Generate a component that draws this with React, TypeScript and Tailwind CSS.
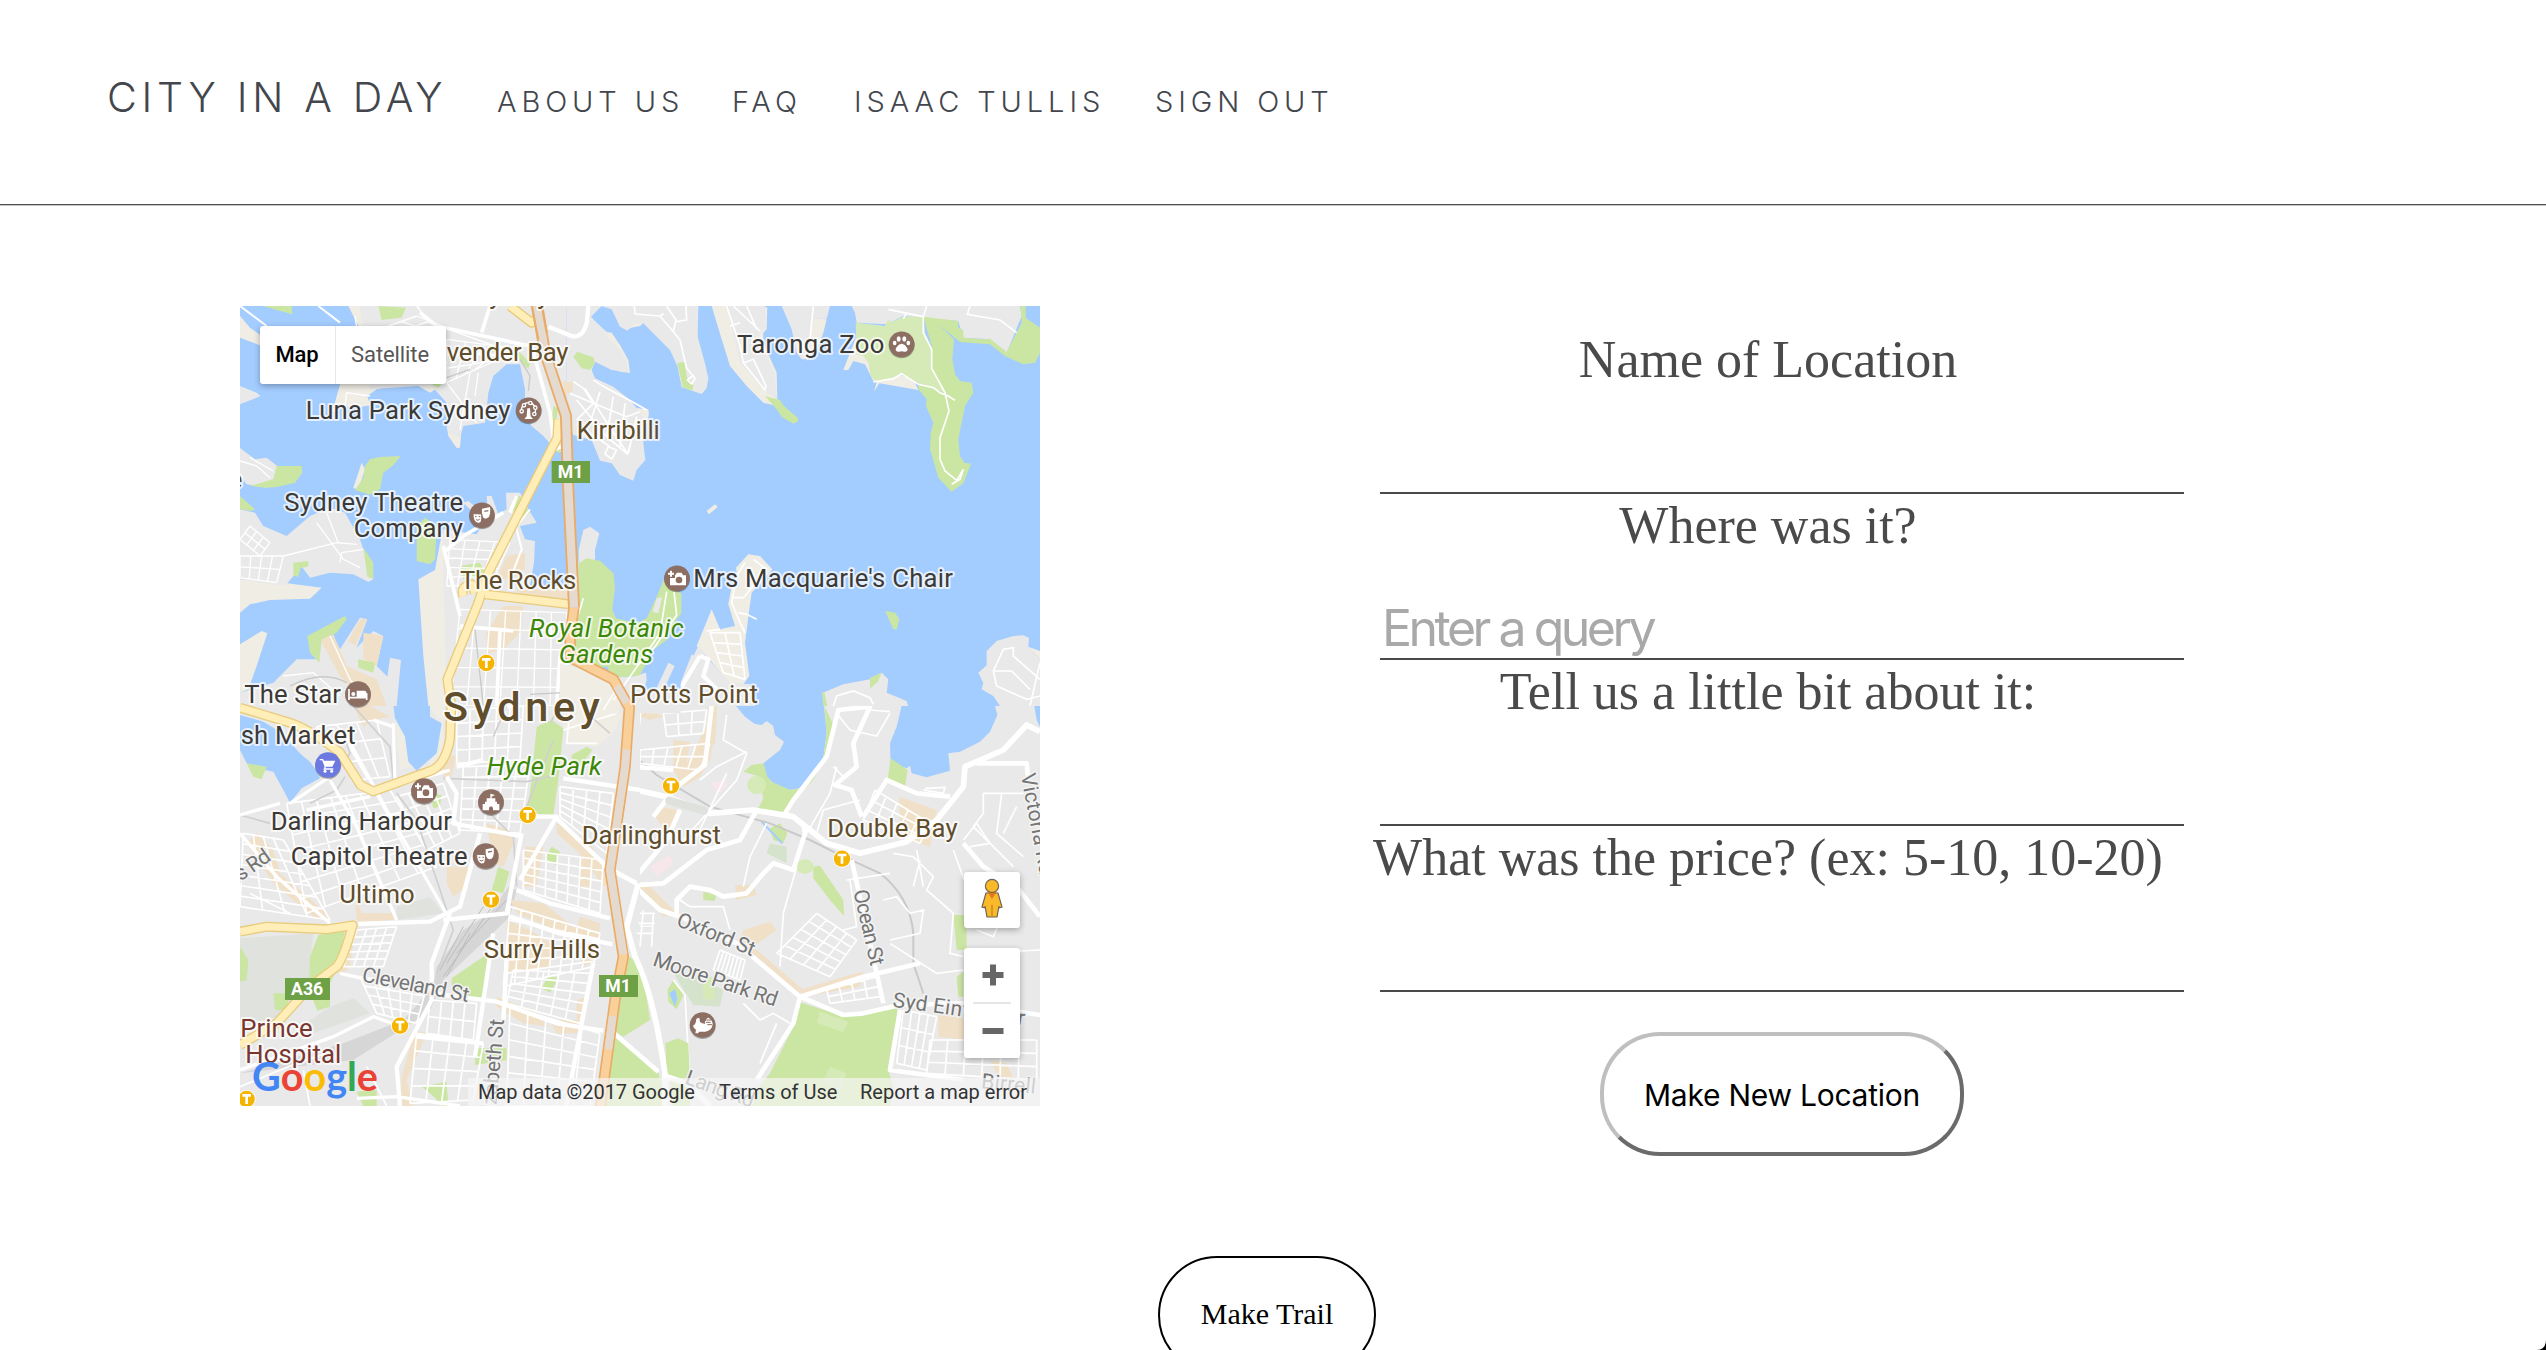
import React from 'react';

type Pt = [number, number];

/* Street grid interpolated inside a quadrilateral a-b-c-d (clockwise). */
function grid(a: Pt, b: Pt, c: Pt, d: Pt, n: number, m: number): string {
  const mix = (p: Pt, q: Pt, t: number): Pt => [p[0] + (q[0] - p[0]) * t, p[1] + (q[1] - p[1]) * t];
  let s = '';
  for (let i = 0; i <= n; i++) {
    const p = mix(a, b, i / n);
    const q = mix(d, c, i / n);
    s += `M${p[0]},${p[1]}L${q[0]},${q[1]}`;
  }
  for (let j = 0; j <= m; j++) {
    const p = mix(a, d, j / m);
    const q = mix(b, c, j / m);
    s += `M${p[0]},${p[1]}L${q[0]},${q[1]}`;
  }
  return s;
}

const LAND = '#e9e9e9';
const CREAM = '#f0ede5';
const PARK = '#cbe6a3';
const WATER = '#a3ccff';
const TAN = '#f0e0c8';
const HOOD = '#5f4d2b';
const POI = '#3c3a37';
const GREEN = '#3c8708';
const ROAD = '#757575';

const Shapes = ({ fill, list }: { fill: string; list: string[] }) => (
  <g fill={fill}>
    {list.map((p, i) => (
      <polygon key={i} points={p} />
    ))}
  </g>
);

const Tile = ({ x, y, vx, vy, children }: { x: number; y: number; vx: number; vy: number; children: React.ReactNode }) => (
  <svg x={x} y={y} width="1200" height="1200" viewBox={`${vx} ${vy} 1200 1200`}>
    {children}
  </svg>
);

function NorthWest() {
  return (
    <Tile x={30} y={30} vx={30} vy={30}>
      <rect x="30" y="30" width="1200" height="1200" fill={WATER} />
      <Shapes
        fill={CREAM}
        list={[
          '355,30 640,30 640,265 600,290 540,255 440,280 412,300 420,328 380,335 345,330 308,348 320,300 335,250 385,90',
          '30,60 60,95 95,120 95,150 30,125',
          '395,500 370,575 385,582 405,520',
          '30,850 160,860 275,875 240,908 120,912 60,925 30,950',
          '30,1045 95,1005 112,1012 80,1110 55,1180 30,1190',
          '650,390 655,420 680,456 690,455 695,395',
          '565,850 615,822 630,740 640,700 680,1230 595,1230 580,1080',
        ]}
      />
      <Shapes
        fill={LAND}
        list={[
          '390,30 560,30 580,60 640,90 700,120 640,265 560,270 420,280 400,100',
          '570,30 1100,30 1072,100 1090,130 1130,165 1190,190 1200,232 1140,222 1090,205 1060,230 1110,270 1170,310 1235,345 1235,525 1210,552 1150,505 1110,450 1050,440 1030,440 1000,472 975,460 940,420 905,390 885,350 885,280 870,205 830,205 790,240 775,290 765,380 700,390 690,425 655,410 650,320 600,265 570,240',
          '30,270 80,290 92,300 30,325',
          '30,456 75,490 110,485 145,512 130,550 110,575 50,565 30,540',
          '30,640 75,650 100,690 170,720 240,660 300,635 345,650 390,730 400,760 430,850 415,858 370,835 300,830 240,845 210,805 190,840 165,870 30,850',
          '130,1160 200,1090 265,1090 275,1030 300,1010 330,1060 390,965 412,970 380,1055 430,1005 460,1020 440,1110 480,1150 470,1230 30,1230 30,1190',
          '480,1085 513,1092 500,1230 460,1230',
          '640,700 740,715 760,680 700,620 715,615 775,665 770,600 785,600 805,655 830,640 828,590 870,590 895,640 920,680 870,690 885,730 915,735 912,800 900,870 1010,870 1050,790 1055,730 1075,690 1105,710 1090,780 1150,860 1160,960 1230,1020 1230,1230 650,1230 640,800',
        ]}
      />
      <Shapes
        fill={TAN}
        list={[
          '830,780 885,770 885,820 845,850 800,850',
          '860,880 1010,880 1010,920 870,910',
          '1000,255 1030,260 1025,290 1005,295',
          '270,1030 310,1015 350,1110 440,1150 470,1230 410,1230 330,1140',
          '400,1010 460,1020 440,1110 400,1090',
          '820,930 880,930 870,1010 820,1060 770,1075 770,1010',
          '355,1035 390,970 412,970 375,1050',
        ]}
      />
      <Shapes
        fill={PARK}
        list={[
          '100,30 185,30 187,55 140,42',
          '445,30 528,35 515,65 455,72',
          '140,510 215,510 217,530 195,560 140,573 110,575 60,570 130,550',
          '420,490 450,483 512,480 490,508 460,530 450,580 420,596 375,582 400,545 405,510',
          '30,600 75,640 65,645 30,640',
          '400,755 430,800 430,850 412,842',
          '190,800 235,795 235,812 212,815 205,842 190,840',
          '232,1020 345,960 350,970 320,1010 275,1030 268,1100 240,1070',
          '560,690 585,665 620,690 615,790 600,805 560,795',
          '850,605 870,600 900,650 875,670 845,640',
          '690,810 750,800 770,840 700,850',
          '385,1090 435,1100 430,1130 385,1115',
          '970,330 985,335 978,380 965,385',
          '780,150 805,145 808,165 785,168',
          '860,160 900,200 895,220 870,195',
          '600,262 635,262 625,276',
          '970,455 1000,460 985,472',
        ]}
      />
      <path
        d={
          grid([30, 780], [160, 780], [140, 860], [30, 845], 4, 2) +
          grid([60, 690], [120, 740], [90, 780], [30, 730], 3, 2) +
          grid([690, 940], [1010, 950], [1010, 1230], [660, 1230], 7, 5) +
          grid([660, 730], [840, 740], [780, 870], [650, 870], 4, 5) +
          grid([650, 130], [880, 160], [760, 210], [650, 260], 4, 3) +
          grid([420, 110], [560, 60], [640, 90], [520, 130], 3, 2) +
          'M30,495L80,510L120,545M60,485L130,525M160,780L320,740L380,745M260,680L340,790L390,815M330,800L335,770L400,760M290,650L325,740M300,1020L360,1150L400,1200M160,1140L250,1130L330,1200M650,260L740,380M720,230L690,400M745,230L735,300M345,330L350,290L420,300M375,60L385,130M560,30L600,80L850,170'
        }
        fill="none"
        stroke="#fff"
        strokeWidth="4"
      />
      <g fill="none" stroke="#fff" strokeLinejoin="round">
        <path strokeWidth="11" d="M570,50L620,90L900,150M905,150L960,350L975,460L1000,450M780,30L755,110M640,770L700,720L820,650M690,990L850,1005M810,1000L800,1230M990,1080L980,1230M640,750L690,960M860,600L840,650" />
        <path strokeWidth="6" d="M850,660L875,760L840,850M900,640L860,690M30,30L110,90M265,30L330,80" />
      </g>
      <g fill="none" stroke="#c9c9c9" strokeWidth="4">
        <path d="M870,190L900,240L895,285M735,1000L760,1230M900,1195L1000,1190L1080,1230M650,245L720,220M180,1170Q280,1120 350,1160" />
      </g>
    </Tile>
  );
}

function NorthEast() {
  return (
    <Tile x={1230} y={30} vx={30} vy={30}>
      <rect x="30" y="30" width="1200" height="1200" fill={WATER} />
      <Shapes
        fill={CREAM}
        list={[
          '245,30 300,30 330,160 420,290 442,305 442,330 400,320 350,270 300,210 275,130',
          '400,30 412,35 410,100 400,110 400,140 440,230 442,305 425,280 380,120',
          '545,65 590,70 580,110 565,150 530,195 535,130',
          '230,645 255,625 263,633 237,655',
          '640,222 655,222 670,195 705,205 730,255 740,258 732,287 748,262 865,282 850,250 780,225 700,180 680,120 660,170',
          '355,775 390,780 427,820 365,890 358,940 345,1040 358,1140 340,1165 300,1165 230,1080 200,1050 245,940 270,1000 315,990 295,925 305,870 325,870 318,815',
          '1195,1052 1230,1065 1230,1090',
        ]}
      />
      <Shapes
        fill={LAND}
        list={[
          '290,30 405,30 408,100 385,105 395,150 435,235 440,310 410,290 330,200 310,120',
          '455,30 600,30 590,68 550,68 535,190 515,190 500,170 485,100',
          '665,30 1170,30 1175,60 1130,170 1080,130 1000,125 985,75 820,60 770,85 680,80 675,50',
          '0,1140 50,1135 50,1170 80,1165 115,1098 135,1105 110,1150 150,1165 185,1075 300,1160 360,1165 375,1230 0,1230',
          '185,1090 205,1050 235,1090 300,1160 250,1200 150,1180',
          '578,1190 640,1165 720,1150 755,1130 775,1150 770,1190 830,1215 835,1232 590,1232',
          '1230,1090 1195,1052 1197,1025 1180,1018 1150,1020 1100,1035 1070,1065 1070,1108 1045,1130 1060,1160 1055,1180 1090,1200 1110,1230 1230,1230',
        ]}
      />
      <Shapes
        fill={PARK}
        list={[
          '405,300 450,312 462,330 503,365 505,375 490,383 455,362 440,340',
          '880,62 985,75 985,95 1000,103 1000,125 1060,130 1080,128 1130,168 1175,80 1172,30 1187,30 1187,65 1230,95 1230,170 1215,200 1180,205 1125,180 1080,145 990,138 925,85 972,130 967,190 975,235 990,255 1025,260 1030,290 1005,330 985,430 990,480 1003,500 1023,503 1000,562 965,587 925,545 915,510 900,460 902,410 910,380 888,330 890,310 865,280 865,262 945,290 905,215 905,150',
          '765,945 795,950 808,970 800,1000 790,1000',
          '720,1145 755,1130 745,1155 720,1178',
          '576,1190 583,1188 592,1230 580,1230',
        ]}
      />
      <polygon fill="#d6eab8" points="677,80 765,90 775,70 785,78 820,62 880,62 885,110 907,160 905,217 945,290 865,262 815,235 775,250 740,258 722,240 715,200 700,180 680,175" />
      <path
        d={
          grid([240, 1010], [330, 1010], [345, 1150], [280, 1130], 2, 4) +
          'M290,30L330,150L340,200L405,282L408,270L370,190L342,200M310,30L390,105M330,80L300,90M350,30L380,100M550,30L540,130M775,40L880,62L890,30M830,50L820,68M1020,30L1012,55L1110,72L1160,110M880,62L880,110L905,160L905,217L945,290L957,345L930,425L930,490L945,525L980,553L1000,520L990,550L965,565M730,258L790,248L815,233L865,265L910,275L930,290L955,300L975,313M345,800L320,840L305,920L330,980L345,1010M370,790L410,820L340,905L305,905M325,950L350,955L380,970M230,1005L270,1000M610,1230L620,1200L670,1185L720,1205L730,1225M1090,1125L1120,1060L1150,1055L1150,1080L1230,1150M1090,1125L1145,1125L1200,1180M1090,1125L1100,1170L1190,1210L1230,1200M1230,1100L1200,1230'
        }
        fill="none"
        stroke="#fff"
        strokeWidth="5"
      />
      <path d="M210,1080L150,1180M210,1080L235,1090L220,1140L260,1180" fill="none" stroke="#fff" strokeWidth="13" strokeLinejoin="round" />
    </Tile>
  );
}

function SouthWest() {
  return (
    <Tile x={30} y={1230} vx={30} vy={18}>
      <rect x="30" y="18" width="1200" height="1200" fill={LAND} />
      <Shapes fill={CREAM} list={['595,18 640,18 640,150 600,210 540,200 540,180 590,200 625,150 635,70', '490,18 530,18 525,120 540,200 510,210', '1000,18 1190,18 1150,100 1100,140 1020,130 1000,80']} />
      <Shapes
        fill={WATER}
        list={[
          '30,45 100,65 150,95 215,165 240,185 262,215 270,235 215,265 180,308 160,270 130,215 80,205 50,190 30,150',
          '490,18 600,18 600,50 635,70 620,160 560,212 535,185 525,110 495,55',
          '300,695 345,690 315,730 295,725',
          '935,275 943,270 940,295',
        ]}
      />
      <Shapes
        fill="#e0e2de"
        list={['30,715 250,700 240,790 240,890 150,950 30,980', '300,920 370,895 420,940 250,1000 200,990', '500,620 600,590 640,640 500,660']}
      />
      <Shapes fill="#d6d6d6" list={['835,560 860,570 840,650 640,840 600,930 560,960 480,1010 370,1080 30,1120 340,1030 520,960 610,860 620,800 700,690 780,640']} />
      <Shapes
        fill={TAN}
        list={[
          '370,18 420,18 480,50 430,60 400,80',
          '80,400 130,450 150,520 290,640 300,665 250,650 130,550 50,430',
          '375,585 395,640 500,640 500,660 380,665',
          '650,500 720,500 710,560 670,590 650,550',
          '770,370 840,390 850,430 820,500 790,490',
          '885,440 940,440 920,560 880,560',
          '840,600 940,610 1030,680 1060,700 1000,700 860,640',
          '830,660 900,690 960,730 960,800 830,820',
          '1050,650 1110,670 1100,780 1060,800 1030,720',
          '1040,900 1070,890 1050,1000 980,1000 960,960 1040,960',
          '800,890 900,930 960,980 880,970 800,920',
          '555,990 590,1000 530,1140 550,1218 510,1218 515,1130',
          '980,370 1080,430 1140,540 1120,560 1060,470 980,400',
          '1050,450 1095,470 1080,560 1050,560',
          '330,700 370,720 360,800 330,830',
          '640,160 680,170 660,240 640,240',
        ]}
      />
      <Shapes
        fill={PARK}
        list={[
          '920,80 965,60 1000,85 985,240 970,345 890,340 905,240',
          '1025,165 1070,140 1087,150 1050,200 1025,190',
          '265,705 345,690 330,790 300,850 300,920 262,932 237,870 240,770',
          '665,835 775,760 770,880 740,900 665,860',
          '30,150 50,190 110,200 95,238 70,230',
          '600,280 635,285 630,320 610,325',
          '805,500 838,515 820,580 785,570',
          '965,440 990,455 975,495 945,475',
          '735,1045 830,1045 830,1080 735,1095',
          '575,1160 650,1145 655,1218 640,1218 600,1180',
          '955,825 985,835 960,878 935,865',
          '380,1175 440,1170 440,1218 400,1218',
          '30,740 55,780 50,840 30,845',
          '130,880 180,880 170,930 135,930',
        ]}
      />
      <path
        d={
          grid([680, 30], [880, 18], [870, 180], [680, 190], 5, 4) +
          grid([700, 200], [900, 195], [870, 400], [690, 390], 5, 6) +
          grid([170, 310], [480, 270], [620, 500], [230, 640], 7, 7) +
          grid([40, 400], [160, 420], [300, 660], [30, 620], 4, 7) +
          grid([380, 690], [500, 680], [460, 800], [340, 800], 4, 5) +
          grid([390, 830], [590, 860], [560, 970], [440, 940], 5, 4) +
          grid([990, 260], [1150, 280], [1130, 460], [990, 350], 4, 5) +
          grid([880, 450], [1120, 480], [1110, 640], [880, 570], 7, 5) +
          grid([840, 620], [1110, 700], [1090, 800], [820, 860], 8, 6) +
          grid([850, 810], [1080, 820], [1050, 970], [830, 910], 5, 5) +
          grid([560, 1000], [760, 1030], [730, 1200], [540, 1210], 4, 4) +
          grid([840, 920], [1110, 1000], [1080, 1218], [830, 1218], 5, 6) +
          grid([600, 900], [740, 910], [730, 1020], [590, 1000], 4, 2) +
          grid([500, 290], [640, 250], [690, 400], [590, 450], 4, 4) +
          grid([260, 80], [440, 60], [480, 230], [380, 240], 3, 3) +
          'M30,1160L200,1090L290,1060M220,1110L240,1218M410,1100L470,1218M60,580L180,640M1000,90L1160,40M1020,30L1010,130L1100,130'
        }
        fill="none"
        stroke="#fff"
        strokeWidth="5"
      />
      <g fill="none" stroke="#d0d0d0" strokeWidth="5">
        <path d="M300,240L360,160L340,100M240,310L320,270L345,230M370,18L480,140L490,240M500,280L560,360L670,690L620,820M780,340L850,410L860,560M960,70L990,18M640,235L890,245L980,225M30,345L120,370M830,18L790,110M970,120L890,320M1060,30L1140,100" />
      </g>
      <path d="M700,680L630,810M760,620L650,790M800,600L640,830M830,600L680,760M720,700L650,830" stroke="#bdbdbd" strokeWidth="3" />
      <g fill="none" stroke="#fff" strokeLinejoin="round">
        <path strokeWidth="13" d="M385,672L600,665L690,620L750,400M660,640L605,790L605,900L500,1100L510,1218M605,880L800,905L980,970L1120,992M790,700L735,1070M875,400L830,640L640,660M860,570L960,610L1140,655M840,650L990,700L1180,740M560,1010L760,1030M650,230L680,280L670,370L880,410M1000,235L1230,270M975,350L1130,500M830,780L820,960M1090,790L1040,1050L1010,1218M870,540L980,350L870,350M680,200L760,180" />
        <path strokeWidth="10" d="M350,110L470,330L660,660M300,240L380,380L500,660M180,310L300,230M150,310L30,345M30,1110L310,1010L430,950L530,985M330,820L420,840L480,870M230,330L420,290M490,70L495,260L660,210M430,60L490,80M30,400L140,530L300,670M690,1218L500,1190L380,1195" />
      </g>
    </Tile>
  );
}

function SouthEast() {
  return (
    <Tile x={1230} y={1230} vx={30} vy={18}>
      <rect x="30" y="18" width="1200" height="1200" fill={LAND} />
      <Shapes
        fill={WATER}
        list={[
          '318,18 345,50 375,72 395,75 410,63 430,78 435,105 462,125 450,150 400,190 410,230 430,250 480,270 525,262 580,172 590,100 582,18',
          '815,18 800,80 780,130 782,190 830,205 840,197 845,220 890,232 960,212 955,160 990,155 1050,125 1080,95 1102,45 1095,18',
          '1213,18 1230,18 1230,80 1220,60',
        ]}
      />
      <Shapes
        fill={TAN}
        list={[
          '130,120 180,125 170,190 240,60 260,70 240,180 210,230 160,260 130,210',
          '235,18 262,18 255,130 225,150',
          '30,18 100,50 60,60 30,50',
          '70,340 90,320 140,330 130,380 100,385',
          '808,290 920,330 900,440 830,420 810,370',
          '315,555 370,555 380,585 320,600',
          '10,555 50,550 140,640 100,650',
          '340,690 420,665 440,690 370,740 520,870 500,890 330,730',
          '510,870 640,830 700,815 690,860 520,890',
          '925,945 1010,955 1010,1020 925,1010',
          '1080,1080 1130,1090 1160,1160 1110,1140',
        ]}
      />
      <Shapes
        fill={PARK}
        list={[
          '583,18 608,70 600,150 550,240 490,300 462,342 385,325 425,245 480,270 525,262 580,172 590,100',
          '782,175 833,210 825,262 773,240',
          '340,215 365,195 400,190 412,230 425,245 400,300 390,230',
          '550,500 570,497 640,600 642,648 600,600 550,535',
          '505,905 640,948 808,922 775,1110 790,1160 780,1218 340,1218 420,1120 500,960',
          '105,1030 145,1015 175,1030 180,1218 130,1218',
          '420,385 450,370 472,400 460,430 430,420',
          '220,575 258,585 255,603 220,600',
          '112,870 130,840 163,880 140,928 115,905',
          '970,645 1010,645 1010,750 980,750',
          '980,830 1000,815 1000,890 985,890',
        ]}
      />
      <polygon fill={WATER} points="118,880 135,868 142,895 135,920" />
      <Shapes fill="#d5e3cd" list={['130,820 200,830 280,870 270,920 190,915', '420,430 470,440 470,490 410,460']} />
      <Shapes fill="#f7e6ea" list={['245,250 285,235 290,260 260,285', '60,500 120,465 130,490 80,530']} />
      <g fill="#d6eab8">
        <circle cx="380" cy="255" r="28" />
        <ellipse cx="525" cy="500" rx="26" ry="22" />
        <path d="M570,935L655,965L640,997L560,968ZM220,830H253V898H220ZM600,1100L650,1120L630,1170L580,1140Z" />
      </g>
      <path d="M395,365L457,430" stroke={WATER} strokeWidth="6" />
      <path d="M10,165L80,225L240,320L420,370L540,420L620,460L750,520Q840,590 850,700V790L880,880" fill="none" stroke="#c9c9c9" strokeWidth="6" />
      <path
        d={
          grid([560, 640], [680, 720], [600, 830], [440, 760], 4, 5) +
          grid([270, 750], [345, 780], [330, 840], [250, 810], 7, 1) +
          grid([590, 870], [740, 830], [750, 890], [600, 910], 4, 2) +
          grid([820, 930], [920, 950], [890, 1110], [800, 1090], 4, 3) +
          grid([900, 1020], [1220, 1020], [1220, 1140], [890, 1120], 6, 3) +
          grid([30, 150], [240, 130], [210, 210], [30, 190], 5, 2) +
          grid([735, 270], [900, 370], [870, 430], [700, 360], 5, 3) +
          grid([100, 40], [230, 30], [220, 100], [110, 110], 3, 2) +
          grid([10, 680], [70, 680], [60, 745], [10, 740], 3, 2) +
          'M290,45L280,120L350,160L320,240L160,420M210,240L260,200L350,155M290,220L200,410M410,370L360,470L340,560M460,640L450,800M460,640L500,500M530,400L600,280L620,200M560,400L580,330L690,300M660,540L680,680L640,690M650,540L780,520M760,600L800,590L840,640L880,630L870,700L780,720M790,460L850,470L910,530L890,570L970,640L960,760L1000,770M860,450L880,560M970,450L1010,560M1060,280V340L1030,380L1150,500M1115,280L1100,400L1180,470M1060,280H1180M1000,420L1040,370L1080,430L1020,440M850,560L870,480M620,40L660,90L740,108L780,40M720,30L780,35M610,200L640,230M340,910L390,960L430,940L480,970M390,1090L440,970M150,600L180,620L280,620L300,690M1040,760L1230,750M1120,640L1090,710L1040,690M780,730L920,820L1000,810M880,270L940,280L945,262L885,265M1160,320L1120,400M130,840L165,885L180,1150'
        }
        fill="none"
        stroke="#fff"
        strokeWidth="5"
      />
      <g fill="none" stroke="#fff" strokeLinejoin="round">
        <path strokeWidth="17" d="M-30,260L110,290L240,340L370,330L490,350L540,390L590,430L690,460L830,425L920,360L1000,260L1005,200L1120,150L1190,75L1230,95M110,1130L170,1150L240,1218" />
        <path strokeWidth="14" d="M245,18L225,195L140,260L70,350M465,340L490,300L590,170L625,30L720,20L670,130L680,200L615,255L665,270L695,350M700,350L770,240L860,280L960,290M10,555L90,630L150,650L320,730L510,890L640,945L700,940L810,915L1000,910L1230,945M510,890L490,970L380,1140M510,890L700,830L870,790M0,550L110,420L150,330M140,640V600L180,560L240,570L280,590L350,580L400,520L430,490L490,510L525,400L520,370M665,480L760,910M810,930L780,1110L1000,1140M380,330L330,420L230,450L100,550L20,555M1040,190L1190,190L1195,240M1000,430L1060,500L1160,560L1230,650M30,18L10,200L130,210" />
      </g>
      <path d="M118,302L222,332" stroke="#dfe1dc" strokeWidth="24" strokeLinecap="round" />
    </Tile>
  );
}

/* Kirribilli shoreline and the ground on the east side of the bridge approach. */
function Kirribilli() {
  return (
    <g transform="translate(930 12)">
      <rect x="80" y="18" width="420" height="560" fill={WATER} />
      <polygon
        fill={CREAM}
        points="195,95 215,98 240,135 265,180 270,218 240,215 200,180"
      />
      <Shapes
        fill={LAND}
        list={[
          '80,18 185,18 153,50 170,68 200,95 205,115 245,155 258,185 268,218 215,210 165,185 155,210 165,235 220,260 270,300 290,325 325,330 325,350 312,400 310,430 316,480 290,510 280,542 240,525 215,490 180,482 155,420 100,405 80,360',
          '183,18 475,18 473,110 495,190 505,235 500,265 485,282 425,262 413,200 390,150 345,105 310,70 285,72 262,92 240,80 215,28',
        ]}
      />
      <Shapes
        fill={PARK}
        list={['100,170 112,155 160,172 165,190 150,210 125,205', '412,188 435,186 440,230 460,255 458,272 428,262 420,225']}
      />
      <Shapes fill={CREAM} list={['290,325 325,328 326,345 312,395 310,350', '262,92 285,70 310,68 300,78 270,84']} />
      <Shapes fill={TAN} list={['70,248 98,245 98,275 75,285']} />
      <path
        fill="none"
        stroke="#fff"
        strokeWidth="5"
        strokeLinejoin="round"
        d="M160,240L195,262L285,310L320,330M100,245L130,265L160,310L260,350L300,335M90,280L160,310L110,360M135,265L215,390L262,460M180,275L150,370M220,290L200,410M255,310L240,440M110,300L200,410L262,462L275,420M290,350L265,460M205,440L195,462L215,477L230,450L205,440M150,400L210,440M283,18L285,42L360,48L400,95L408,60L380,18M360,48L372,40M438,18L440,60L410,65M400,95L420,120L440,205L465,235L455,252L442,240L462,225"
      />
      <path d="M145,18L140,70Q130,110 100,110L25,80" fill="none" stroke="#fff" strokeWidth="13" />
    </g>
  );
}

/* Farm Cove with the gardens wrapped round it. */
function FarmCove() {
  return (
    <g transform="translate(930 12)">
      <rect x="116" y="600" width="306" height="570" fill={WATER} />
      <Shapes
        fill={LAND}
        list={[
          '116,750 130,690 150,680 178,700 165,750 165,785 116,795',
          '90,1090 200,1130 275,1130 318,1118 320,1140 312,1172 348,1168 385,1088 404,1098 375,1160 360,1180 422,1165 422,1240 90,1240',
        ]}
      />
      <polygon fill={CREAM} points="60,1090 200,1130 240,1170 240,1240 60,1240" />
      <Shapes
        fill={PARK}
        list={[
          '116,790 140,775 180,782 220,820 225,860 217,930 228,955 270,965 300,965 320,955 350,890 375,830 400,870 424,880 424,940 395,980 380,1020 340,1050 300,1125 275,1130 205,1130 205,1100 150,1100 100,1070 92,1000 116,940',
        ]}
      />
      <polygon fill={LAND} points="350,895 366,892 355,940 338,935" />
      <path d="M380,875L360,1000L270,1130L220,1200M402,875L410,945L345,1040L290,1100M130,895L110,960M240,1150L190,1230" fill="none" stroke="#fff" strokeWidth="5" />
    </g>
  );
}

/* Parkland and approach road beside the southern end of the M1. */
function MooreParkEdge() {
  return (
    <g transform="translate(930 1392)">
      <polygon fill={LAND} points="220,500 370,500 370,1038 190,1038" />
      <Shapes fill={PARK} list={['258,585 285,600 315,680 330,780 250,830 225,815 240,700', '222,825 355,940 385,1038 190,1038', '378,860 410,838 445,850 450,960 378,940']} />
      <path d="M300,460H345M295,490H345M290,520H340M310,450L300,560M340,460L335,560" stroke="#fff" strokeWidth="5" />
      <path d="M295,370L260,500L285,590Q340,700 375,940V1038" fill="none" stroke="#fff" strokeWidth="17" />
      <path d="M222,820L355,935M215,330L290,370" fill="none" stroke="#fff" strokeWidth="14" />
    </g>
  );
}

const ARTERIALS = 'M985,370L982,425L770,840L745,920L652,1150L664,1230L660,1330Q645,1410 600,1425L430,1486L392,1468L330,1370Q240,1300 180,1280L30,1235M765,895L1020,925M30,1907L110,1892L290,1900L368,1888Q340,1990 320,2012L240,2072L140,2182L30,2247M840,30L905,80L930,60M700,900Q690,870 725,865L735,890';
const M1_NORTH = 'M922,30L945,170L1008,360L1014,560L1032,935';
const M1_SOUTH = 'M1032,935L1020,1020L1022,1085L1150,1150L1198,1235L1185,1415L1140,1722L1180,1982L1155,2112L1110,2440';

function Thoroughfares() {
  return (
    <g fill="none" strokeLinejoin="round">
      <path d={ARTERIALS} stroke="#e8cb7d" strokeWidth="30" />
      <path d={ARTERIALS} stroke="#ffeeb8" strokeWidth="22" />
      <path d={M1_SOUTH} stroke="#e9ac68" strokeWidth="34" />
      <path d={M1_NORTH} stroke="#e9ac68" strokeWidth="36" />
      <path d={M1_SOUTH} stroke="#fad09a" strokeWidth="24" />
      <path d="M1173,1365L1140,1722L1180,1982" stroke="none" />
      <path d="M1190,1360L1185,1415L1140,1722L1180,1975M1160,1170L1190,1220M1148,2160L1135,2260" stroke="#e4dacf" strokeWidth="23" />
      <path d={M1_NORTH} stroke="#e4dacf" strokeWidth="25" />
      <path d="M905,30L925,130M935,30L950,110" stroke="#e9ac68" strokeWidth="6" />
    </g>
  );
}

type Label = [text: string, x: number, baseline: number, width: number, color: string, italic?: boolean];

const LABELS: Label[] = [
  ['Lavender Bay', 570, 195, 445, HOOD],
  ['Luna Park Sydney', 227, 369, 614, POI],
  ['Kirribilli', 1040, 430, 249, HOOD],
  ['Sydney Theatre', 163, 644, 536, POI],
  ['Company', 371, 722, 328, POI],
  ['The Rocks', 690, 879, 349, HOOD],
  ['Royal Botanic', 897, 1022, 464, GREEN, true],
  ['Gardens', 986, 1101, 283, GREEN, true],
  ['The Star', 43, 1220, 290, POI],
  ['Taronga Zoo', 1521, 171, 442, POI],
  ["Mrs Macquarie's Chair", 1390, 873, 779, POI],
  ['Potts Point', 1200, 1220, 384, HOOD],
  ['sh Market', 32, 1343, 345, POI],
  ['Hyde Park', 770, 1437, 345, GREEN, true],
  ['Darling Harbour', 122, 1602, 544, POI],
  ['Capitol Theatre', 182, 1706, 531, POI],
  ['Ultimo', 328, 1820, 226, HOOD],
  ['Surry Hills', 761, 1985, 349, HOOD],
  ['Prince', 31, 2222, 217, '#79362f'],
  ['Hospital', 46, 2300, 288, '#79362f'],
  ['Darlinghurst', 1055, 1644, 418, HOOD],
  ['Double Bay', 1792, 1623, 391, HOOD],
];

type RoadLabel = [text: string, x: number, y: number, angle: number, width: number];

const ROAD_LABELS: RoadLabel[] = [
  ['Cleveland St', 394, 2056, 11, 325],
  ['Oxford St', 1336, 1888, 22, 248],
  ['Moore Park Rd', 1265, 2008, 18.5, 390],
  ['Ocean St', 1870, 1786, 77, 232],
  ['Syd Einfeld Dr', 1986, 2132, 8, 400],
  ['Victoria Rd', 2372, 1436, 79, 310],
  ['Elizabeth St', 794, 2492, -85, 322],
  ['Harris Rd', -70, 1828, -35, 240],
  ['Lang Rd', 1362, 2362, 20, 215],
  ['Birrell St', 2252, 2376, 6, 240],
];

const Pin = ({ x, y, fill = '#8d6e63', children }: { x: number; y: number; fill?: string; children: React.ReactNode }) => (
  <g transform={`translate(${x} ${y})`}>
    <circle cy="3" r="39" fill="#000" opacity="0.3" />
    <circle r="38.5" fill={fill} />
    {children}
  </g>
);

const Masks = () => (
  <g>
    <path d="M0,-20L24,-25Q28,10 10,10Q-2,8 0,-20Z" fill="#fff" />
    <path d="M7,-12L19,-14" stroke="#8d6e63" strokeWidth="4" />
    <path d="M-27,-5L-1,-4Q2,26 -12,24Q-28,20 -27,-5Z" fill="#fff" stroke="#8d6e63" strokeWidth="3" />
    <path d="M-21,4H-16M-10,4H-5M-18,13Q-12,17 -7,12" stroke="#8d6e63" strokeWidth="3" fill="none" />
  </g>
);

const Camera = () => (
  <g>
    <path d="M-6,-9L0,-17H14L18,-9H27V21H-21V-1H-6Z" fill="#fff" />
    <circle cx="6" cy="5" r="10" fill="#8d6e63" />
    <path d="M-18,-23V-5M-27,-14H-9" stroke="#fff" strokeWidth="6" />
  </g>
);

const STATIONS: Pt[] = [
  [769, 1101],
  [893, 1557],
  [783, 1811],
  [510, 2189],
  [50, 2409],
  [1323, 1469],
  [1836, 1688],
];

const SHIELDS: [string, number, number, number][] = [
  ['M1', 965, 495, 115],
  ['A36', 165, 2046, 135],
  ['M1', 1107, 2037, 117],
];

function MapCanvas() {
  return (
    <svg viewBox="30 30 2400 2400" className="block size-full font-['Roboto']">
      <NorthWest />
      <NorthEast />
      <SouthWest />
      <SouthEast />
      <Kirribilli />
      <FarmCove />
      <MooreParkEdge />
      <Thoroughfares />

      <g fontSize="63" fill={ROAD} stroke="#f3f3f3" strokeWidth="9" strokeLinejoin="round" paintOrder="stroke">
        {ROAD_LABELS.map(([t, x, y, a, w]) => (
          <text key={t} transform={`translate(${x} ${y}) rotate(${a})`} textLength={w}>
            {t}
          </text>
        ))}
      </g>

      {SHIELDS.map(([t, x, y, w]) => (
        <g key={x}>
          <rect x={x} y={y} width={w} height="66" fill="#6ea046" />
          <text x={x + w / 2 - 1} y={y + 51} textAnchor="middle" fontSize="53" fontWeight="700" fill="#fff">
            {t}
          </text>
        </g>
      ))}

      {STATIONS.map(([x, y]) => (
        <g key={`${x}-${y}`}>
          <circle cx={x} cy={y} r="27" fill="#fff" />
          <circle cx={x} cy={y} r="24.5" fill="#f5b400" />
          <path d={`M${x - 13},${y - 11}H${x + 13}M${x},${y - 11}V${y + 15}`} stroke="#fff" strokeWidth="8" />
        </g>
      ))}

      <g fontSize="77" stroke="#fff" strokeOpacity="0.72" strokeWidth="12" strokeLinejoin="round" paintOrder="stroke">
        {LABELS.map(([t, x, y, w, c, it]) => (
          <text key={t} x={x} y={y} textLength={w} fill={c} fontStyle={it ? 'italic' : 'normal'}>
            {t}
          </text>
        ))}
        <text x="550" y="25" textLength="408" fill={HOOD}>
          North Sydney
        </text>
        <text x="-4" y="576" fill={HOOD}>
          e
        </text>
        <text x="639" y="1275" fontSize="124" fontWeight="500" textLength="470" fill={HOOD}>
          Sydney
        </text>
      </g>

      <Pin x={896} y={343}>
        <g fill="none" stroke="#fff" strokeWidth="4">
          <path d="M-20,6A21,21 0 1 1 18,8" />
          <circle cx="-21" cy="3" r="5" fill="#8d6e63" />
          <circle cx="-14" cy="-15" r="5" fill="#8d6e63" />
          <circle cx="5" cy="-22" r="5" fill="#8d6e63" />
          <circle cx="20" cy="-8" r="5" fill="#8d6e63" />
          <circle cx="17" cy="11" r="5" fill="#8d6e63" />
        </g>
        <path d="M-4,-6H4L6,18L13,26H-13L-6,18Z" fill="#fff" />
      </Pin>
      <Pin x={756} y={658}>
        <Masks />
      </Pin>
      <Pin x={767} y={1680}>
        <Masks />
      </Pin>
      <Pin x={384} y={1194}>
        <path d="M-27,-15V18M-27,11H26M26,18V-2" stroke="#fff" strokeWidth="5" fill="none" />
        <path d="M-4,-10H18Q26,-10 26,0V9H-4Z" fill="#fff" />
        <circle cx="-14" cy="0" r="6" fill="#fff" />
      </Pin>
      <Pin x={2015} y={145}>
        <g fill="#fff">
          <ellipse cx="-21" cy="-4" rx="5.5" ry="7" />
          <ellipse cx="-9" cy="-16" rx="6" ry="8" />
          <ellipse cx="8" cy="-16" rx="6" ry="8" />
          <ellipse cx="20" cy="-4" rx="5.5" ry="7" />
          <path d="M0,-2C8,-2 18,10 18,16Q17,23 8,22Q0,20 -8,22Q-18,23 -18,15C-18,10 -8,-2 0,-2Z" />
        </g>
      </Pin>
      <Pin x={1341} y={847}>
        <Camera />
      </Pin>
      <Pin x={582} y={1485}>
        <Camera />
      </Pin>
      <Pin x={783} y={1518}>
        <path d="M-2,-25L12,-21L2,-16V-11H13V-1H18V6H25V25H6V17Q0,8 -6,17V25H-25V6H-18V-1H-13V-11H-2Z" fill="#fff" />
      </Pin>
      <Pin x={294} y={1407} fill="#6b79e0">
        <path d="M-25,-16H-16L-8,5L-11,12H16" stroke="#fff" strokeWidth="4" fill="none" />
        <path d="M-15,-13H22L13,5H-8Z" fill="#fff" />
        <circle cx="-9" cy="19" r="4.500" fill="#fff" />
        <circle cx="11" cy="19" r="4.500" fill="#fff" />
      </Pin>
      <Pin x={1418} y={2187}>
        <path d="M-19,-19L-10,-22L-8,-9Q0,-3 8,-4Q4,-12 12,-14Q8,-20 18,-22Q30,-14 30,-2Q28,18 8,20H-10L-14,25H-22L-20,14Q-30,8 -28,1Q-20,-2 -19,-19Z" fill="#fff" />
        <path d="M10,-8H24M12,-15H26M14,-1H28" stroke="#8d6e63" strokeWidth="3" />
      </Pin>

      <text x="66" y="2384" fontSize="118" fontWeight="700" textLength="378" lengthAdjust="spacingAndGlyphs" className="font-['Lato']">
        <tspan fill="#4285f4">G</tspan>
        <tspan fill="#ea4335">o</tspan>
        <tspan fill="#fbbc05">o</tspan>
        <tspan fill="#4285f4">g</tspan>
        <tspan fill="#34a853">l</tspan>
        <tspan fill="#ea4335">e</tspan>
      </text>
    </svg>
  );
}

function Pegman() {
  return (
    <svg viewBox="0 0 56 56" className="size-14">
      <path d="M22,21L18,35L21,36V34L23,45H33L35,34V36L38,35L34,21Z" fill="#fbb829" stroke="#6b6558" strokeWidth="1.2" />
      <path d="M23,19.500H33L28,27Z" fill="#e07a1a" />
      <path d="M28,33V45" stroke="#b98220" strokeWidth="1.2" />
      <circle cx="28" cy="14" r="6.600" fill="#fbb829" stroke="#6b6558" strokeWidth="1.2" />
    </svg>
  );
}

function LocationMap() {
  return (
    <div className="relative size-[800px] shrink-0 overflow-hidden font-['Roboto']">
      <MapCanvas />
      <div className="absolute top-5 left-5 flex h-[58px] w-[186px] rounded-[3px] bg-white text-[22px] leading-[56px] shadow-[0_2px_6px_rgba(0,0,0,0.3)]">
        <button className="w-[76px] border-r border-gray-200 pr-px text-center font-medium tracking-[-0.2px] text-black">Map</button>
        <button className="flex-1 pr-0.5 text-center tracking-[-0.1px] text-[#565656]">Satellite</button>
      </div>
      <div className="absolute top-[566px] right-5 rounded-[3px] bg-white shadow-[0_2px_6px_rgba(0,0,0,0.3)]">
        <Pegman />
      </div>
      <div className="absolute top-[642px] right-5 flex h-[110px] w-14 flex-col items-center rounded-[3px] bg-white shadow-[0_2px_6px_rgba(0,0,0,0.3)]">
        <svg viewBox="0 0 56 54" className="h-[54px] w-14">
          <path d="M18.500,27H39.500M29,16.500V37.500" stroke="#666" strokeWidth="6" />
        </svg>
        <div className="h-0.5 w-[38px] bg-[#e6e6e6]" />
        <svg viewBox="0 0 56 54" className="h-[54px] w-14">
          <path d="M18.500,27H39.500" stroke="#666" strokeWidth="6" />
        </svg>
      </div>
      <div className="absolute right-0 bottom-0 flex h-7 w-[572px] items-center bg-[#f5f5f5]/70 pb-px pl-[10px] text-[20px] whitespace-nowrap text-[#333]">
        <span className="w-[241px] tracking-[-0.05px]">Map data ©2017 Google</span>
        <span className="w-[141px]">Terms of Use</span>
        <span>Report a map error</span>
      </div>
    </div>
  );
}

function Header() {
  return (
    <header className="h-[206px] border-b border-[#c4c4c4]">
      <nav className="flex h-[205px] items-start border-b border-[#505053] pl-[107px] font-['Inter'] font-[350] whitespace-nowrap text-[#43464d]">
        <a className="mt-[67px] w-[390px] text-[41px] leading-[60px] tracking-[4.7px]">CITY IN A DAY</a>
        <a className="mt-[82px] w-[235px] text-[29px] leading-[40px] tracking-[4.9px]">ABOUT US</a>
        <a className="mt-[82px] w-[122px] text-[29px] leading-[40px] tracking-[4.9px]">FAQ</a>
        <a className="mt-[82px] w-[301px] text-[29px] leading-[40px] tracking-[4.9px]">ISAAC TULLIS</a>
        <a className="mt-[82px] text-[29px] leading-[40px] tracking-[4.9px]">SIGN OUT</a>
      </nav>
    </header>
  );
}

function Field({ label, placeholder }: { label: string; placeholder?: string }) {
  return (
    <label className="flex h-[166px] flex-col justify-between">
      <span className="flex justify-center pt-0.5 pr-7 text-[52px] leading-[60px] whitespace-nowrap text-[#4a4a4a]">{label}</span>
      <input
        placeholder={placeholder}
        className="h-[62px] w-full border-b-2 border-[#4a4a4a] bg-transparent pl-0.5 font-['Inter'] text-[50px] tracking-[-3.5px] outline-none placeholder:text-[#a9a9a9]"
      />
    </label>
  );
}

export default function App() {
  return (
    <div className="relative h-[1350px] overflow-hidden bg-white font-['Liberation_Serif']">
      <Header />
      <main className="flex h-[950px] pt-[100px] pl-[240px]">
        <LocationMap />
        <form className="mt-[22px] ml-[340px] flex w-[804px] flex-col">
          <Field label="Name of Location" />
          <Field label="Where was it?" placeholder="Enter a query" />
          <Field label="Tell us a little bit about it:" />
          <Field label="What was the price? (ex: 5-10, 10-20)" />
          <button
            type="button"
            className="mt-10 h-[124px] w-[364px] shrink-0 self-center rounded-[60px] border-4 border-t-[#bfbfbf] border-r-[#6b6b6b] border-b-[#6b6b6b] border-l-[#bfbfbf] pt-0.5 font-['Inter'] text-[30px] tracking-[-0.25px] text-black"
          >
            Make New Location
          </button>
        </form>
      </main>
      <div className="flex justify-center pt-[100px] pr-3">
        <button className="h-[118px] w-[218px] rounded-[60px] border-2 border-black pb-1 text-[30px] text-black">Make Trail</button>
      </div>
      <svg viewBox="0 0 10 10" className="absolute right-0 bottom-0 size-2.5">
        <path d="M10,0Q10,10 0,10H10Z" fill="#000" />
      </svg>
    </div>
  );
}
